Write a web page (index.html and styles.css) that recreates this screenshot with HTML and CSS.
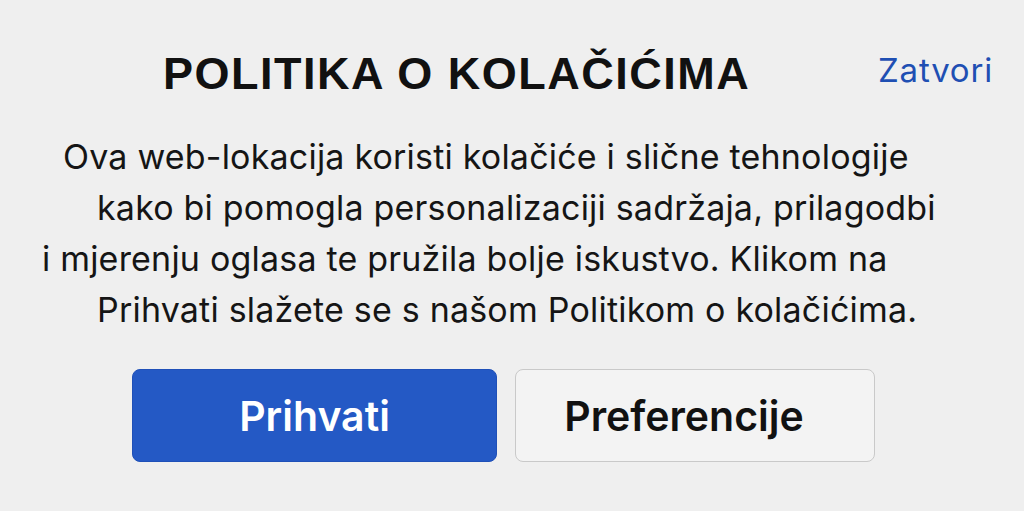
FILE: index.html
```html
<!DOCTYPE html>
<html lang="hr">
<head>
<meta charset="utf-8">
<link rel="stylesheet" href="styles.css">
</head>
<body>
<div class="dialog">
  <header class="head">
    <h1 class="title">POLITIKA O KOLAČIĆIMA</h1>
    <a class="close" href="#">Zatvori</a>
  </header>
  <div class="text">
    <span class="line l1">Ova web-lokacija koristi kolačiće i slične tehnologije</span>
    <span class="line l2">kako bi pomogla personalizaciji sadržaja, prilagodbi</span>
    <span class="line l3">i mjerenju oglasa te pružila bolje iskustvo. Klikom na</span>
    <span class="line l4">Prihvati slažete se s našom Politikom o kolačićima.</span>
  </div>
  <div class="actions">
    <button class="btn primary">Prihvati</button>
    <button class="btn secondary">Preferencije</button>
  </div>
</div>
</body>
</html>
```
FILE: styles.css
```css
html, body {
  margin: 0;
  padding: 0;
  background: #efefef;
}
.dialog {
  width: 1024px;
  height: 511px;
  display: flex;
  flex-direction: column;
  font-family: Inter, "Liberation Sans", sans-serif;
  color: #151515;
}
.head {
  display: flex;
  align-items: flex-start;
  padding: 48px 31px 0 163px;
}
.title {
  margin: 0;
  font-family: "Liberation Sans", Arial, sans-serif;
  font-weight: 700;
  font-size: 45px;
  line-height: 52px;
  letter-spacing: 1.5px;
  color: #111;
}
.close {
  margin-left: auto;
  margin-top: 2px;
  font-size: 33px;
  letter-spacing: 0.8px;
  color: #1f4fb3;
  text-decoration: none;
}
.text {
  display: flex;
  flex-direction: column;
  margin-top: 31px;
  font-size: 34px;
  line-height: 51px;
  letter-spacing: 0.2px;
}
.line { display: block; white-space: nowrap; }
.l1 { padding-left: 63px; }
.l2 { padding-left: 97px; }
.l3 { padding-left: 42px; }
.l4 { padding-left: 97px; }
.actions {
  display: flex;
  gap: 18px;
  padding-left: 132px;
  margin-top: 34px;
}
.btn {
  height: 93px;
  padding: 0;
  border-radius: 8px;
  font-family: Inter, "Liberation Sans", sans-serif;
  font-size: 41px;
  font-weight: 600;
  cursor: pointer;
}
.primary {
  width: 365px;
  background: #2459c5;
  border: 1px solid #1f50b8;
  color: #fff;
}
.secondary {
  width: 360px;
  padding-right: 22px;
  background: #f3f3f3;
  border: 1px solid #c9c9c9;
  color: #111;
}
```
